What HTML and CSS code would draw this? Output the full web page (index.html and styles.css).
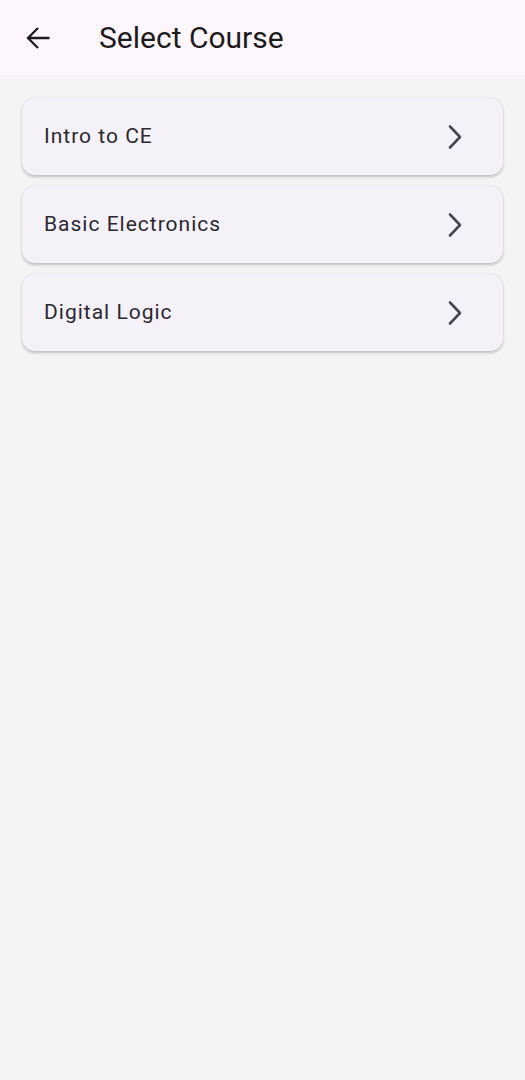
FILE: index.html
```html
<!DOCTYPE html>
<html>
<head>
<meta charset="utf-8">
<link rel="stylesheet" href="styles.css">
</head>
<body>
<header class="appbar">
  <button class="back" aria-label="Back">
    <svg width="26" height="26" viewBox="0 0 26 26"><path d="M24.5 13H3.5M13 3L3 13l10 10" fill="none" stroke="#1d1b20" stroke-width="2.3" stroke-linejoin="miter"/></svg>
  </button>
  <h1 class="title">Select Course</h1>
</header>
<main class="list">
  <div class="card"><span class="label">Intro to CE</span><svg class="chev" width="18" height="26" viewBox="0 0 18 26"><path d="M4 2.5l10 10.5-10 10.5" fill="none" stroke="#49454f" stroke-width="2.6" stroke-linecap="round" stroke-linejoin="round"/></svg></div>
  <div class="card"><span class="label">Basic Electronics</span><svg class="chev" width="18" height="26" viewBox="0 0 18 26"><path d="M4 2.5l10 10.5-10 10.5" fill="none" stroke="#49454f" stroke-width="2.6" stroke-linecap="round" stroke-linejoin="round"/></svg></div>
  <div class="card"><span class="label">Digital Logic</span><svg class="chev" width="18" height="26" viewBox="0 0 18 26"><path d="M4 2.5l10 10.5-10 10.5" fill="none" stroke="#49454f" stroke-width="2.6" stroke-linecap="round" stroke-linejoin="round"/></svg></div>
</main>
</body>
</html>
```
FILE: styles.css
```css
html, body {
  margin: 0;
  padding: 0;
  background: #f4f4f4;
  font-family: Roboto, "Noto Sans", sans-serif;
  color: #1d1b20;
}
body {
  min-height: 1080px;
}
.appbar {
  height: 75px;
  background: #fdf7fd;
  display: flex;
  align-items: center;
  padding-left: 25px;
  box-sizing: border-box;
}
.back {
  border: none;
  background: none;
  padding: 0;
  width: 26px;
  height: 26px;
  display: flex;
  margin-top: 0;
}
.title {
  margin: 0 0 0 48px;
  font-size: 30px;
  font-weight: 400;
  letter-spacing: 0;
  color: #1d1b20;
}
.list {
  display: flex;
  flex-direction: column;
  gap: 11px;
  padding: 23px 22px 0 22px;
}
.card {
  height: 77px;
  box-sizing: border-box;
  background: #f5f1f8;
  border-radius: 13px;
  box-shadow: 0 1.5px 3px rgba(0,0,0,0.22), 0 0 1px rgba(0,0,0,0.06);
  display: flex;
  align-items: center;
  justify-content: space-between;
  padding: 0 39px 0 22px;
}
.label {
  font-size: 21px;
  letter-spacing: 1px;
  color: #2a2830;
  margin-top: -2px;
}
.chev {
  display: block;
}
```
